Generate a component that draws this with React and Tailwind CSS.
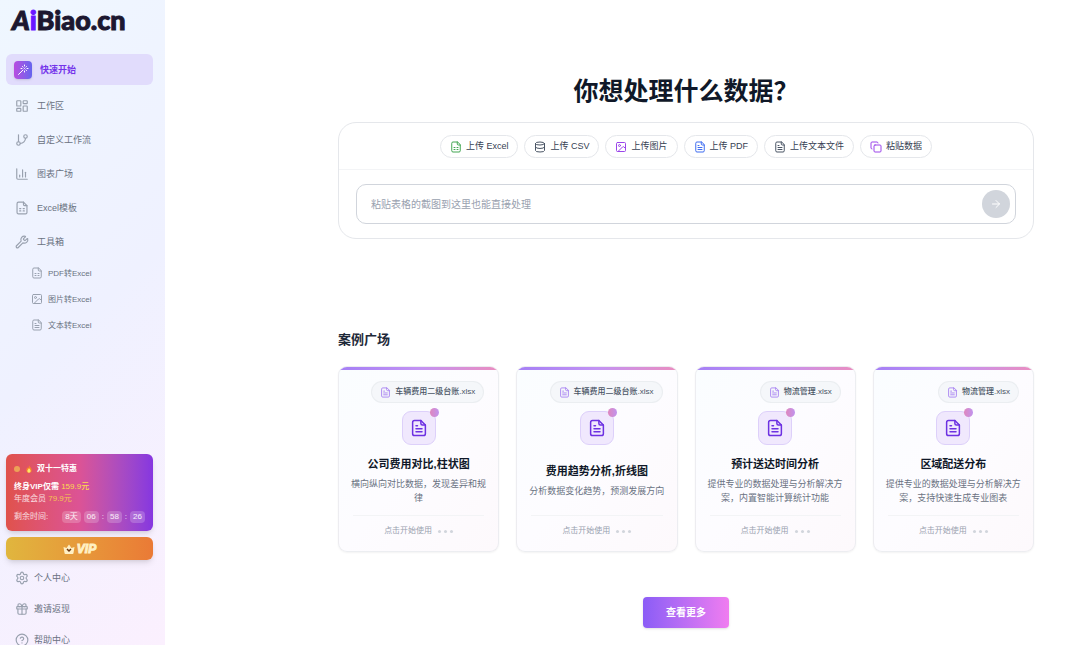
import React from 'react';
import {
  ArrowRight,
  ChartColumn,
  CircleHelp,
  Copy,
  Database,
  GitBranch,
  Gift,
  Image,
  LayoutDashboard,
  Settings,
  Wand,
  Wrench,
} from 'lucide-react';

// page outline with a folded corner, shared by the document icons
const FileIcon = ({ size = 24, className, children }) => (
  <svg
    width={size}
    height={size}
    viewBox="0 0 24 24"
    fill="none"
    stroke="currentColor"
    strokeWidth="2"
    strokeLinecap="round"
    strokeLinejoin="round"
    className={className}
    aria-hidden="true"
  >
    <path d="M14.5 2H6a2.5 2.5 0 0 0-2.5 2.5v15A2.5 2.5 0 0 0 6 22h12a2.5 2.5 0 0 0 2.5-2.5V8z" />
    <path d="M14.5 2v4a2 2 0 0 0 2 2h4" />
    {children}
  </svg>
);

const SheetFile = (props) => (
  <FileIcon {...props}>
    <path d="M8 13h2M14 13h2M8 17h2M14 17h2" />
  </FileIcon>
);

const TextFile = (props) => (
  <FileIcon {...props}>
    <path d="M8 9h2M8 13h8M8 17h8" />
  </FileIcon>
);

const navItems = [
  { label: '工作区', icon: LayoutDashboard },
  { label: '自定义工作流', icon: GitBranch },
  { label: '图表广场', icon: ChartColumn },
  { label: 'Excel模板', icon: SheetFile },
  { label: '工具箱', icon: Wrench },
];

const toolItems = [
  { label: 'PDF转Excel', icon: SheetFile },
  { label: '图片转Excel', icon: Image },
  { label: '文本转Excel', icon: TextFile },
];

const accountItems = [
  { label: '个人中心', icon: Settings },
  { label: '邀请返现', icon: Gift },
  { label: '帮助中心', icon: CircleHelp },
];

const uploads = [
  { label: '上传 Excel', icon: SheetFile, color: 'text-[#43a653]' },
  { label: '上传 CSV', icon: Database, color: 'text-gray-600' },
  { label: '上传图片', icon: Image, color: 'text-[#9b45ea]' },
  { label: '上传 PDF', icon: TextFile, color: 'text-[#3f6df0]' },
  { label: '上传文本文件', icon: TextFile, color: 'text-gray-600' },
  { label: '粘贴数据', icon: Copy, color: 'text-[#9b45ea]' },
];

const cases = [
  { file: '车辆费用二级台账.xlsx', title: '公司费用对比,柱状图', desc: '横向纵向对比数据，发现差异和规律' },
  { file: '车辆费用二级台账.xlsx', title: '费用趋势分析,折线图', desc: '分析数据变化趋势，预测发展方向' },
  { file: '物流管理.xlsx', title: '预计送达时间分析', desc: '提供专业的数据处理与分析解决方案，内置智能计算统计功能' },
  { file: '物流管理.xlsx', title: '区域配送分布', desc: '提供专业的数据处理与分析解决方案，支持快速生成专业图表' },
];

const Flame = () => (
  <svg viewBox="0 0 24 24" className="h-2 w-2" aria-hidden="true">
    <path d="M12 1c1 4 8 8 8 14a8 8 0 0 1-16 1c0-4 2-6 3-9 1 2 2 3 3 3 1-3 2-6 2-9z" fill="#f9832a" />
    <path d="M12 9c1 3 5 5 5 9a5 5 0 0 1-10 0c0-4 4-5 5-9z" fill="#fde66a" />
  </svg>
);

const Crown = () => (
  <svg viewBox="0 0 24 24" className="h-3 w-3" aria-hidden="true">
    <path d="M1 8l6 2 5-7 5 7 6-2-2 12a2 2 0 0 1-2 2H5a2 2 0 0 1-2-2z" fill="#fff0c4" />
    <path d="M8 12l4 4 4-4" fill="none" stroke="#6b3410" strokeWidth="3" />
  </svg>
);

const TimeBox = ({ children }) => (
  <span className="rounded-sm bg-white/20 px-[3px] text-white/90">{children}</span>
);

const Promo = () => (
  <section className="h-[77px] rounded-md bg-linear-to-r from-[#e0524b] via-[#dc5395] to-[#8636e0] px-2 pt-[9px] text-[8px] leading-3 text-white/80 shadow-md">
    <div className="flex items-center gap-1 font-bold text-white">
      <span className="mr-px h-[6px] w-[6px] rounded-full bg-[#eda257]" />
      <Flame />
      <span>双十一特惠</span>
    </div>
    <p className="mt-[6px] font-bold text-white">
      终身VIP仅需 <span className="font-medium text-[#fbd94f]">159.9元</span>
    </p>
    <p>
      年度会员 <span className="text-[#f5c452]">79.9元</span>
    </p>
    <div className="mt-[6px] flex items-center justify-between">
      <span>剩余时间:</span>
      <div className="flex items-center gap-[3px]">
        <TimeBox>8天</TimeBox>
        <TimeBox>06</TimeBox>
        <span>:</span>
        <TimeBox>58</TimeBox>
        <span>:</span>
        <TimeBox>26</TimeBox>
      </div>
    </div>
  </section>
);

const Sidebar = () => (
  <aside className="flex h-screen w-[165px] shrink-0 flex-col overflow-hidden bg-linear-135 from-[#eff7ff] via-[#eff1ff] to-[#fbf0fe] text-[9px] text-gray-500">
    <div className="h-[54px] pl-3 pt-1 font-['Lato'] text-[27px] font-black leading-8 text-[#1c1730] [-webkit-text-stroke:1px]">
      <span className="italic">A</span>
      <span className="text-[#6a14ff]">i</span>Biao.cn
    </div>

    <nav className="flex-1 pl-[6px] pr-3">
      <a href="#start" className="flex h-[31px] items-center gap-2 rounded-md bg-[#e1dcfc] px-2 font-bold text-[#7434ea]">
        <span className="flex h-[18px] w-[18px] items-center justify-center rounded bg-linear-to-r from-[#b84be0] to-[#6463ee] text-white shadow">
          <Wand size={12} strokeWidth={2} />
        </span>
        <span className="pt-[2px]">快速开始</span>
      </a>
      <div className="mt-1">
        {navItems.map(({ label, icon: Icon }) => (
          <a key={label} href="#nav" className="flex h-[34px] items-center gap-2 pl-[9px]">
            <Icon size={14} className="text-gray-400" />
            <span className="pt-px">{label}</span>
          </a>
        ))}
      </div>
      <div className="mt-px text-[8px]">
        {toolItems.map(({ label, icon: Icon }) => (
          <a key={label} href="#tool" className="flex h-[26px] items-center gap-[5px] pl-[25px]">
            <Icon size={12} className="text-gray-400" />
            <span className="pt-[2px]">{label}</span>
          </a>
        ))}
      </div>
    </nav>

    <div className="pl-[6px] pr-3">
      <Promo />
      <button className="mt-[6px] flex h-[23px] w-full items-center justify-center gap-[2px] rounded-md bg-linear-to-r from-[#e0b63e] to-[#ea7a36] text-[12px] font-bold italic text-[#fff0c4] shadow-md [-webkit-text-stroke:1px]">
        <Crown />
        VIP
      </button>
    </div>
    <div className="max-h-[85px] overflow-hidden pl-[6px] pr-3 pt-[2px]">
      {accountItems.map(({ label, icon: Icon }) => (
        <a key={label} href="#account" className="flex h-[31px] items-center gap-[5px] pl-[9px]">
          <Icon size={14} className="text-gray-400" />
          <span className="pt-[2px]">{label}</span>
        </a>
      ))}
    </div>
  </aside>
);

const UploadPanel = () => (
  <section className="mt-[15px] rounded-[18px] border border-gray-200 bg-white">
    <div className="flex items-center justify-center gap-[6px] border-b border-gray-100 pb-[11px] pt-3">
      {uploads.map(({ label, icon: Icon, color }) => (
        <button
          key={label}
          className="flex h-[23px] items-center gap-1 rounded-full border border-gray-200 px-[9px] text-[9px] text-gray-700"
        >
          <Icon size={12} className={color} />
          {label}
        </button>
      ))}
    </div>
    <div className="px-[17px] pb-[14px] pt-[14px]">
      <div className="flex h-10 items-center rounded-[10px] border border-gray-300 pl-[14px] pr-[5px]">
        <input
          type="text"
          aria-label="粘贴表格的截图"
          placeholder="粘贴表格的截图到这里也能直接处理"
          className="min-w-0 flex-1 bg-transparent text-[10px] outline-none placeholder:text-gray-400"
        />
        <button aria-label="发送" className="flex h-7 w-7 items-center justify-center rounded-full bg-gray-300 text-white">
          <ArrowRight size={12} />
        </button>
      </div>
    </div>
  </section>
);

const CaseCard = ({ file, title, desc }) => (
  <article className="flex h-[186px] flex-col overflow-hidden rounded-[9px] border border-gray-200/70 bg-linear-to-br from-[#fafdff] via-[#fdfcff] to-[#fdf9fc] shadow-xs">
    <div className="h-[3px] shrink-0 bg-linear-to-r from-[#a57ff5] via-[#c292f3] to-[#ea8dc0]" />
    <div className="flex flex-1 flex-col px-[11px] pt-[11px]">
      <div className="mr-[3px] flex h-[22px] items-center gap-1 self-end rounded-full border border-gray-200/60 bg-[#f5f7fa] px-2 text-[8px] font-medium text-gray-600">
        <TextFile size={11} className="text-[#a884f2]" />
        {file}
      </div>
      <div className="relative mt-2 flex h-[34px] w-[34px] items-center justify-center self-center rounded-[9px] border border-[#ddd0fa] bg-[#f0e8fd]">
        <TextFile size={18} className="text-[#6d31e2]" />
        <span className="absolute -right-1 -top-1 h-[9px] w-[9px] rounded-full bg-linear-to-r from-[#df86bd] to-[#c093ee]" />
      </div>
      <div className="mt-[5px] flex flex-1 flex-col justify-center text-center">
        <h3 className="text-[11px] font-bold leading-[18px] text-gray-900">{title}</h3>
        <p className="mt-1 text-[9px] leading-[14px] text-gray-500">{desc}</p>
      </div>
      <div className="mx-[3px] mt-[5px] flex h-[36px] items-start justify-center gap-[6px] border-t border-gray-100 pt-[9px] text-[8px] leading-3 text-gray-400">
        点击开始使用
        <span className="flex h-3 items-center gap-[3px]">
          <span className="h-[3px] w-[3px] rounded-full bg-gray-300" />
          <span className="h-[3px] w-[3px] rounded-full bg-gray-300" />
          <span className="h-[3px] w-[3px] rounded-full bg-gray-300" />
        </span>
      </div>
    </div>
  </article>
);

const App = () => {
  return (
    <div className="flex h-screen overflow-hidden bg-white font-['Liberation_Sans','Noto_Sans_CJK_SC',sans-serif]">
      <Sidebar />
      <main className="min-w-0 flex-1 pl-[173px] pr-[46px] pt-[75px]">
        <h1 className="text-center text-[25px] font-bold leading-8 text-gray-900">你想处理什么数据？</h1>
        <UploadPanel />

        <h2 className="mt-[91px] text-[13px] font-bold leading-5 text-gray-800">案例广场</h2>
        <div className="mt-4 grid grid-cols-4 gap-[17px]">
          {cases.map((item) => (
            <CaseCard key={item.title} {...item} />
          ))}
        </div>

        <div className="mt-[45px] flex justify-center">
          <button className="h-[31px] rounded bg-linear-to-r from-[#8b5cf6] to-[#f07cf0] px-[23px] text-[10px] font-bold text-white shadow">
            查看更多
          </button>
        </div>
      </main>
    </div>
  );
};

export default App;
